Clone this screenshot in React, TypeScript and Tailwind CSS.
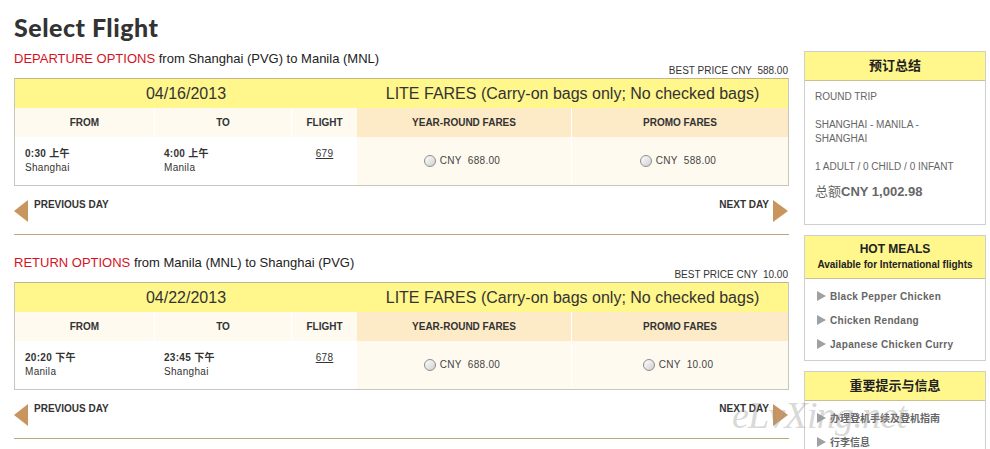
import React from "react"

type Leg = {
  label: string
  route: string
  best: string
  date: string
  depTime: string
  depCity: string
  arrTime: string
  arrCity: string
  flight: string
  yearRound: string
  promo: string
}

const legs: Leg[] = [
  {
    label: "DEPARTURE OPTIONS",
    route: "from Shanghai (PVG) to Manila (MNL)",
    best: "588.00",
    date: "04/16/2013",
    depTime: "0:30 上午",
    depCity: "Shanghai",
    arrTime: "4:00 上午",
    arrCity: "Manila",
    flight: "679",
    yearRound: "688.00",
    promo: "588.00",
  },
  {
    label: "RETURN OPTIONS",
    route: "from Manila (MNL) to Shanghai (PVG)",
    best: "10.00",
    date: "04/22/2013",
    depTime: "20:20 下午",
    depCity: "Manila",
    arrTime: "23:45 下午",
    arrCity: "Shanghai",
    flight: "678",
    yearRound: "688.00",
    promo: "10.00",
  },
]

function Radio({ price }: { price: string }) {
  return (
    <div className="flex items-center gap-[4px] text-[10px] text-[#444]">
      <span className="w-[12px] h-[12px] rounded-full border border-[#8d8d8d] bg-linear-to-br from-white to-[#cfcfcf]" />
      <span className="whitespace-pre">CNY  {price}</span>
    </div>
  )
}

function LegSection({ leg, first }: { leg: Leg; first?: boolean }) {
  return (
    <section className={first ? "" : "mt-[19px]"}>
      <div className="h-[18px] leading-[18px] text-[13px] text-[#222]">
        <span className="text-[#d4121e]">{leg.label}</span> {leg.route}
      </div>
      <div className="-mt-[2px] h-[10px] leading-[10px] text-[10px] text-[#333] text-right pr-[1px] whitespace-pre">
        BEST PRICE CNY  {leg.best}
      </div>
      <div className="mt-[2px] border border-[#c9c6bd] border-t-[#c7b68c]">
        <div className="flex h-[29px] bg-[#fff68c] text-[16px] text-[#333] leading-[29px]">
          <div className="w-[342px] text-center">{leg.date}</div>
          <div className="flex-1 text-center">LITE FARES (Carry-on bags only; No checked bags)</div>
        </div>
        <div className="flex h-[29px] text-[10px] font-bold text-[#333] leading-[29px]">
          <div className="w-[140px] bg-[#fefaef] border-r border-white text-center">FROM</div>
          <div className="w-[137px] bg-[#fefaef] border-r border-white text-center">TO</div>
          <div className="w-[65px] bg-[#fefaef] text-center">FLIGHT</div>
          <div className="w-[215px] bg-[#fdebc8] border-r border-white text-center">YEAR-ROUND FARES</div>
          <div className="flex-1 bg-[#fdebc8] text-center">PROMO FARES</div>
        </div>
        <div className="flex h-[48px] text-[10px] text-[#333] leading-[14px] tracking-[0.03em]">
          <div className="w-[140px] pt-[10px] pl-[10px]">
            <div className="font-bold">{leg.depTime}</div>
            <div>{leg.depCity}</div>
          </div>
          <div className="w-[137px] pt-[10px] pl-[9px]">
            <div className="font-bold">{leg.arrTime}</div>
            <div>{leg.arrCity}</div>
          </div>
          <div className="w-[65px] pt-[10px] text-center">
            <span className="underline">{leg.flight}</span>
          </div>
          <div className="w-[215px] bg-[#fffaf0] border-r border-white flex items-center justify-center pr-[4px]">
            <Radio price={leg.yearRound} />
          </div>
          <div className="flex-1 bg-[#fffaf0] flex items-center justify-center pr-[4px]">
            <Radio price={leg.promo} />
          </div>
        </div>
      </div>
      <div className="mt-[14px] h-[22px] flex justify-between text-[10px] font-bold text-[#333]">
        <div className="flex gap-[6px]">
          <span className="w-0 h-0 border-y-[11px] border-y-transparent border-r-[14px] border-r-[#c9955f]" />
          <span className="leading-[10px]">PREVIOUS DAY</span>
        </div>
        <div className="flex gap-[4px] pr-[1px]">
          <span className="leading-[10px]">NEXT DAY</span>
          <span className="w-0 h-0 border-y-[11px] border-y-transparent border-l-[15px] border-l-[#c9955f]" />
        </div>
      </div>
      <div className="mt-[12px] h-px bg-[#bba67f]" />
    </section>
  )
}

function Tri() {
  return <span className="w-0 h-0 border-y-[5px] border-y-transparent border-l-[9px] border-l-[#a0a0a0]" />
}

export default function App() {
  return (
    <div className="relative w-[990px] h-[449px] overflow-hidden bg-white flex gap-[15px] pl-[14px] font-['Liberation_Sans','Noto_Sans_CJK_SC',Arial,sans-serif]">
      <main className="w-[775px] shrink-0">
        <h1 className="h-[50px] pt-[12px] text-[25px] leading-[30px] font-black tracking-[0.02em] text-[#333] font-['Lato',sans-serif]">
          Select Flight
        </h1>
        {legs.map((l, i) => (
          <LegSection key={i} leg={l} first={i === 0} />
        ))}
      </main>

      <aside className="w-[182px] shrink-0 pt-[51px]">
        <div className="h-[174px] border border-[#cfcfcf]">
          <div className="h-[29px] bg-[#fff68c] border-b border-[#cdbf95] text-center leading-[28px] text-[13px] font-bold text-[#222]">
            预订总结
          </div>
          <div className="px-[10px] pt-[9px] text-[10px] leading-[14px] text-[#666]">
            <div>ROUND TRIP</div>
            <div className="mt-[14px]">SHANGHAI - MANILA -<br />SHANGHAI</div>
            <div className="mt-[14px]">1 ADULT / 0 CHILD / 0 INFANT</div>
            <div className="mt-[9px] text-[13px] leading-[18px] font-bold">
              <span className="font-normal">总额</span>CNY 1,002.98
            </div>
          </div>
        </div>

        <div className="mt-[10px] h-[126px] border border-[#cfcfcf]">
          <div className="h-[43px] bg-[#fff68c] border-b border-[#cdbf95] text-center font-bold text-[#222] pt-[6px]">
            <div className="text-[12px] leading-[14px]">HOT MEALS</div>
            <div className="mt-[2px] text-[10px] leading-[14px]">Available for International flights</div>
          </div>
          <ul className="pt-[5px] pl-[12px] text-[10px] font-bold text-[#666] tracking-[0.03em]">
            {["Black Pepper Chicken", "Chicken Rendang", "Japanese Chicken Curry"].map((m) => (
              <li key={m} className="h-[24px] flex items-center gap-[4px]">
                <Tri />
                {m}
              </li>
            ))}
          </ul>
        </div>

        <div className="mt-[10px] h-[120px] border border-[#cfcfcf]">
          <div className="h-[29px] bg-[#fff68c] border-b border-[#cdbf95] text-center leading-[28px] text-[13px] font-bold text-[#222]">
            重要提示与信息
          </div>
          <ul className="pt-[5px] pl-[12px] text-[10px] font-bold text-[#666]">
            {["办理登机手续及登机指南", "行李信息"].map((m) => (
              <li key={m} className="h-[24px] flex items-center gap-[4px]">
                <Tri />
                {m}
              </li>
            ))}
          </ul>
        </div>
      </aside>

      <div className="absolute left-[732px] top-[394px] text-[38px] leading-[42px] italic tracking-[-0.02em] text-[#9a9a9a]/40 font-['Liberation_Serif',serif] pointer-events-none">
        eLvXing.net
      </div>
    </div>
  )
}
